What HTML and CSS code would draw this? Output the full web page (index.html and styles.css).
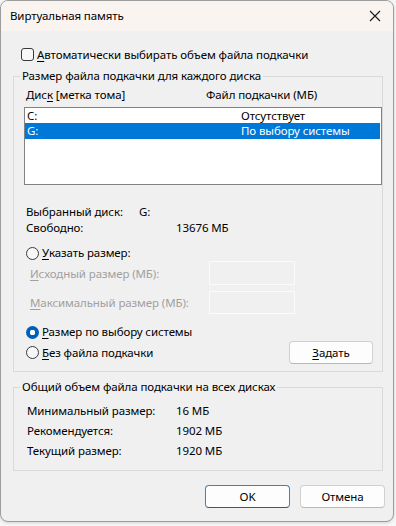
FILE: index.html
```html
<!DOCTYPE html>
<html lang="ru">
<head>
<meta charset="utf-8">
<title>Виртуальная память</title>
<link rel="stylesheet" href="styles.css">
</head>
<body>
<div class="window">
  <div class="titlebar">
    <span class="title">Виртуальная память</span>
    <svg class="close" width="12" height="12" viewBox="0 0 12 12"><path d="M1 1 L11 11 M11 1 L1 11" stroke="#1a1a1a" stroke-width="1.1" fill="none"/></svg>
  </div>
  <div class="body">
    <div class="check-row"><span class="checkbox"></span><span><u>А</u>втоматически выбирать объем файла подкачки</span></div>

    <fieldset class="group g1">
      <legend>Размер файла подкачки для каждого диска</legend>
      <div class="list-head"><span class="h1">Дис<u>к</u> [метка тома]</span><span>Файл подкачки (МБ)</span></div>
      <div class="listbox">
        <div class="lrow"><span class="c1">C:</span><span>Отсутствует</span></div>
        <div class="lrow sel"><span class="c1">G:</span><span>По выбору системы</span></div>
      </div>
      <div class="info first"><span class="lbl w113">Выбранный диск:</span><span>G:</span></div>
      <div class="info"><span class="lbl w150">Свободно:</span><span>13676 МБ</span></div>
      <div class="radio-row r1"><span class="radio"></span><span><u>У</u>казать размер:</span></div>
      <div class="field-row f1"><span class="flbl"><u>И</u>сходный размер (МБ):</span><span class="tbox"></span></div>
      <div class="field-row f2"><span class="flbl"><u>М</u>аксимальный размер (МБ):</span><span class="tbox"></span></div>
      <div class="radio-row r3"><span class="radio on"></span><span><u>Р</u>азмер по выбору системы</span></div>
      <div class="radio-row r4"><span class="radio"></span><span><u>Б</u>ез файла подкачки</span><button class="btn set"><u>З</u>адать</button></div>
    </fieldset>

    <fieldset class="group g2">
      <legend>Общий объем файла подкачки на всех дисках</legend>
      <div class="trow"><span class="tl">Минимальный размер:</span><span>16 МБ</span></div>
      <div class="trow"><span class="tl">Рекомендуется:</span><span>1902 МБ</span></div>
      <div class="trow"><span class="tl">Текущий размер:</span><span>1920 МБ</span></div>
    </fieldset>

    <div class="footer">
      <button class="btn dlg default">OK</button>
      <button class="btn dlg">Отмена</button>
    </div>
  </div>
</div>
</body>
</html>
```

FILE: styles.css
```css
* { box-sizing: border-box; }
html, body { margin: 0; padding: 0; }
body {
  background: #f6f6f6;
  font-family: "Noto Sans", "Open Sans", sans-serif;
  font-size: 11.5px;
  letter-spacing: -0.1px;
  color: #000;
  width: 396px;
  height: 526px;
  overflow: hidden;
}
u { text-decoration: underline; text-underline-offset: 2px; }

.window {
  width: 394px;
  height: 522px;
  border: 1px solid #9c9c9c;
  border-radius: 8px;
  overflow: hidden;
  background: #f0f0f0;
  box-shadow: 0 1px 3px rgba(0,0,0,0.15);
}
.titlebar {
  height: 30px;
  background: #faf4f1;
  display: flex;
  align-items: center;
  padding: 0 9px 1px 9px;
}
.title { flex: 1; line-height: 16px; }
.close { margin-right: 3px; }

.body {
  padding: 15px 10px 0 12px;
}
.check-row {
  display: flex;
  align-items: center;
  height: 16px;
  padding-left: 8px;
  gap: 3px;
}
.checkbox {
  width: 13px; height: 13px;
  border: 1px solid #3a3a3a;
  border-radius: 3px;
  background: #f8f8f8;
}

.group {
  margin: 0;
  padding: 0;
  border: 1px solid #d9d9d9;
  min-width: 0;
}
.group legend {
  padding: 0 2px;
  margin-left: 6px;
  line-height: 16px;
  height: 16px;
}
.g1 { margin-top: 6px; padding-bottom: 7px; }

.list-head {
  display: flex;
  height: 16px;
  line-height: 16px;
  margin: 3px 0 0 12px;
}
.list-head .h1 { width: 180px; }

.listbox {
  margin: 4px 0 0 10px;
  height: 78px;
  background: #fff;
  border: 1px solid #828282;
  padding: 0 1px 0 0;
}
.lrow {
  display: flex;
  height: 15px;
  line-height: 15px;
  padding-left: 2px;
  overflow: hidden;
}
.lrow .c1 { width: 214px; }
.lrow.sel { background: #0078d7; color: #fff; height: 16px; line-height: 16px; }

.info {
  display: flex;
  height: 16px;
  line-height: 16px;
  margin-left: 12px;
}
.info.first { margin-top: 19px; }
.lbl.w113 { width: 113px; }
.lbl.w150 { width: 150px; }

.radio-row {
  display: flex;
  align-items: center;
  gap: 3px;
  margin-left: 12px;
  height: 16px;
  line-height: 16px;
}
.r1 { margin-top: 9px; }
.r3 { margin-top: 10px; }
.r4 { margin-top: 1px; height: 23px; margin-right: 9px; }
.radio {
  width: 13px; height: 13px;
  border-radius: 50%;
  border: 1px solid #3a3a3a;
  background: #f7f7f7;
  flex: none;
}
.radio.on {
  border: none;
  background: radial-gradient(circle, #fff 0 2.6px, #005fb8 3px);
}

.field-row {
  display: flex;
  align-items: center;
  margin-left: 16px;
  height: 24px;
  color: #a0a0a0;
}
.f2 { margin-top: 6px; height: 23px; }
.flbl { width: 179px; }
.tbox {
  width: 86px;
  height: 100%;
  border: 1px solid #fbfbfb;
  background: #f0f0f0;
}

.btn {
  font-family: inherit;
  font-size: 11.5px;
  letter-spacing: -0.1px;
  color: #000;
  background: #fdfdfd;
  border: 1px solid #d0d0d0;
  border-bottom-color: #b8b8b8;
  border-radius: 4px;
  height: 23px;
  padding: 0;
  line-height: 20px;
}
.set { margin-left: auto; width: 84px; }

.g2 { margin-top: 7px; padding-top: 6px; padding-bottom: 9px; }
.trow {
  display: flex;
  height: 20px;
  line-height: 20px;
  margin-left: 13px;
}
.trow .tl { width: 149px; }

.footer {
  display: flex;
  justify-content: flex-end;
  gap: 10px;
  margin-top: 14px;
  margin-right: -2px;
}
.dlg { width: 85px; }
.default { border: 1px solid #4b7ea8; border-bottom-color: #1f5f95; }
```
